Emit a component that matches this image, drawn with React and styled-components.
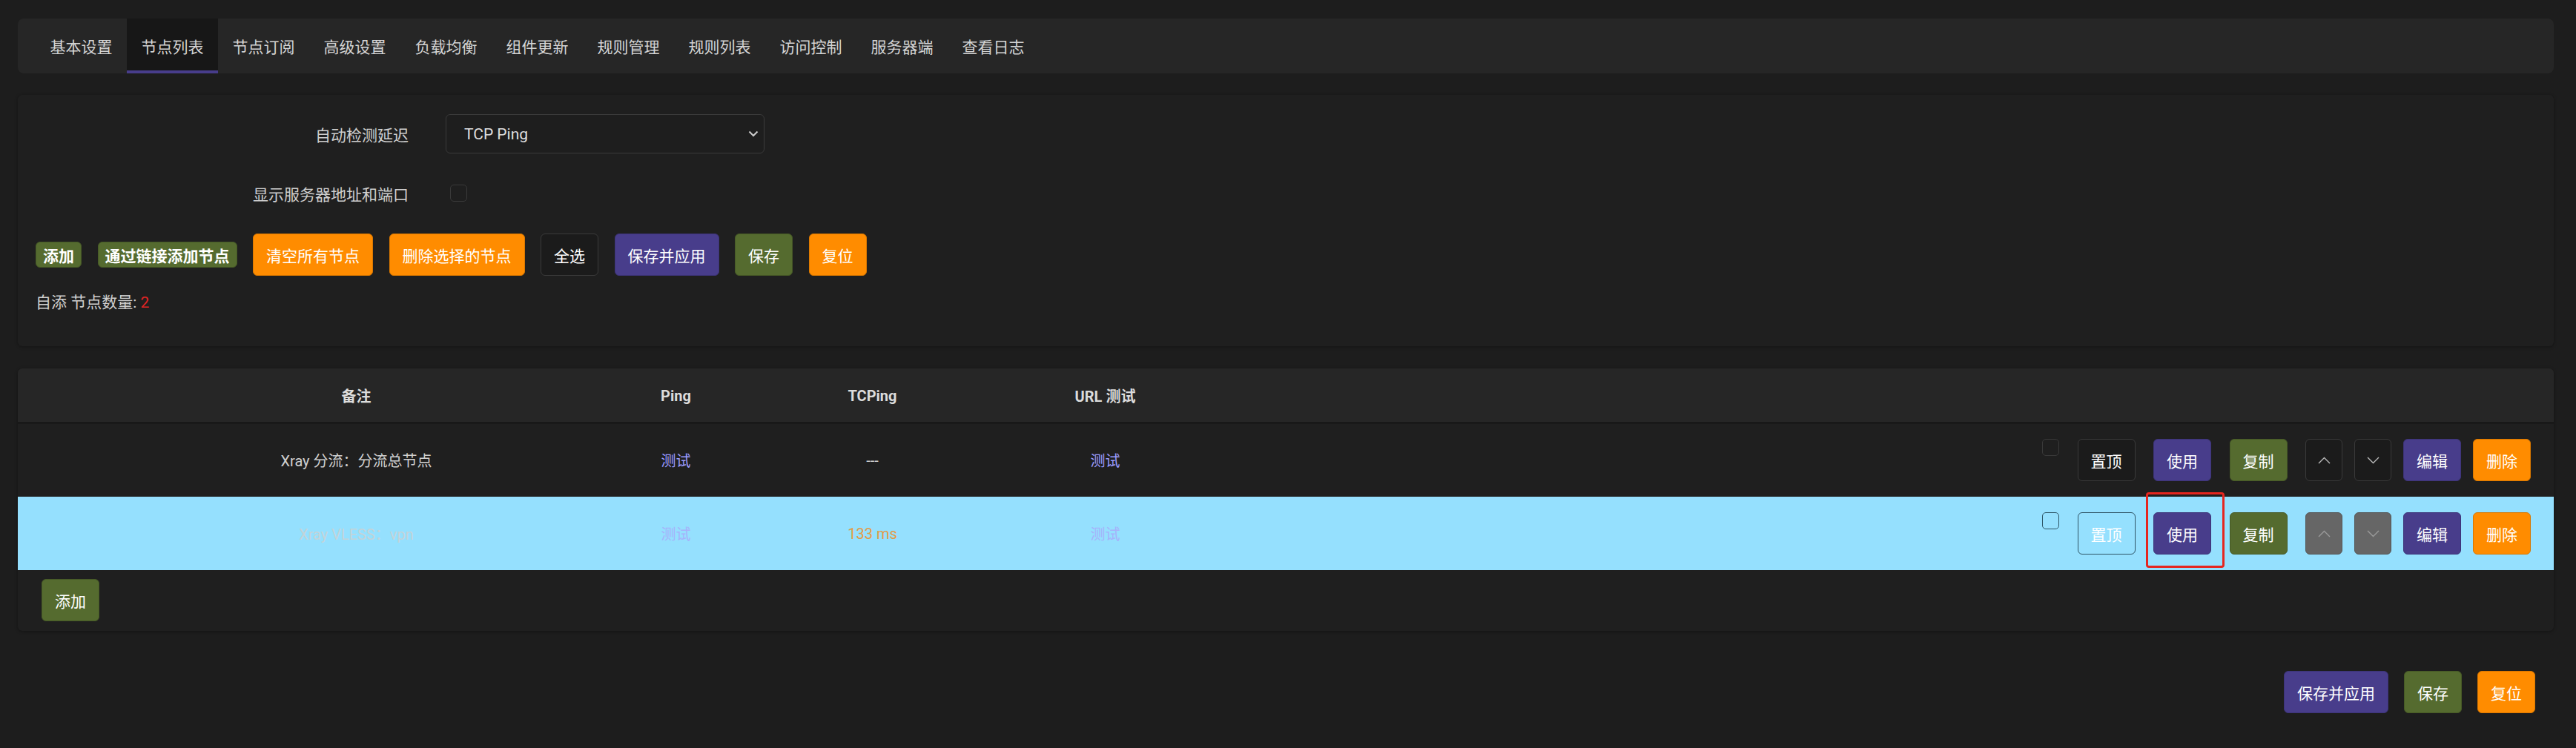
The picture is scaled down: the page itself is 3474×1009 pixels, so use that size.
import React from 'react';
import styled, { createGlobalStyle, css } from 'styled-components';

const GlobalStyle = createGlobalStyle`
    * { box-sizing: border-box; }
    body {
        margin: 0;
        background: #1d1d1d;
        font-family: Roboto, "Noto Sans CJK SC", sans-serif;
        color: #d2d2d2;
    }
`;

const Page = styled.div`
    padding: 25px 30px 40px 24px;
`;

const TabBar = styled.nav`
    display: flex;
    height: 74px;
    padding-left: 24px;
    background: #262626;
    border-radius: 8px;
`;

const Tab = styled.div`
    display: flex;
    align-items: center;
    padding: 0 19.5px;
    font-size: 21px;
    color: #d4d4d4;
    background: ${({ $active }) => ($active ? '#171717' : 'transparent')};
    box-shadow: ${({ $active }) => ($active ? 'inset 0 -4px 0 #483d8b' : 'none')};
`;

const Panel = styled.section`
    margin-top: ${({ $gap }) => $gap}px;
    background: #1f1f1f;
    border-radius: 6px;
    box-shadow: 0 1px 4px rgba(0, 0, 0, 0.35);
    overflow: hidden;
`;

const SettingsBody = styled.div`
    padding: 26px 24px 47px;
`;

const FormRow = styled.div`
    display: grid;
    grid-template-columns: 503px 430px;
    column-gap: 50px;
    align-items: center;
    height: 53px;
    margin-bottom: ${({ $mb }) => $mb || 0}px;
`;

const Label = styled.label`
    text-align: right;
    font-size: 21px;
    color: #cfcfcf;
`;

const SelectBox = styled.div`
    display: flex;
    align-items: center;
    justify-content: space-between;
    height: 53px;
    padding: 0 7px 0 24px;
    border: 1px solid #3b3b3b;
    border-radius: 6px;
    background: #1e1e1e;
    font-size: 21px;
    color: #dedede;
`;

const Check = styled.span`
    display: block;
    width: 23px;
    height: 23px;
    border: 1px solid ${({ $light }) => ($light ? '#2d5566' : '#3a3a3a')};
    border-radius: 5px;
    background: transparent;
    align-self: ${({ $top }) => ($top ? 'flex-start' : 'auto')};
    margin-top: ${({ $top }) => ($top ? '21px' : '0')};
    margin-left: ${({ $ml }) => $ml || 0}px;
`;

const ButtonRow = styled.div`
    display: flex;
    align-items: center;
    gap: 21.5px;
    margin-top: 28px;
`;

const variants = {
    orange: css`background: #ff8c00; border-color: #d97700;`,
    purple: css`background: #483d8b; border-color: #3d3478;`,
    green: css`background: #556b2f; border-color: #465926;`,
    dark: css`background: #1b1b1b; border-color: #3a3a3a;`,
    ghost: css`background: transparent; border-color: #2f5566;`,
    gray: css`background: #666666; border-color: #555555;`,
};

const Button = styled.button`
    display: inline-flex;
    align-items: center;
    justify-content: center;
    height: ${({ $small }) => ($small ? '35px' : '57px')};
    padding: ${({ $small, $icon }) => ($icon ? '0' : $small ? '0 9px' : '0 17px')};
    width: ${({ $icon }) => ($icon ? '50px' : 'auto')};
    border: 1px solid;
    border-radius: 6px;
    font-family: Roboto, "Noto Sans CJK SC", sans-serif;
    font-size: 21px;
    font-weight: ${({ $small }) => ($small ? 700 : 400)};
    color: #ffffff;
    cursor: pointer;
    ${({ $variant }) => variants[$variant]}
`;

const Count = styled.div`
    margin-top: 24px;
    font-size: 21px;
    line-height: 24px;
    color: #cfcfcf;

    b {
        font-weight: 400;
        color: #e02424;
    }
`;

const columns = '158px 597px 265px 265px 363px 1fr';

const HeadRow = styled.div`
    display: grid;
    grid-template-columns: ${columns};
    height: 74px;
    background: #262626;
    border-bottom: 1px solid #050505;
`;

const HeadCell = styled.div`
    display: flex;
    align-items: center;
    justify-content: center;
    font-size: 20px;
    font-weight: 700;
    color: #dcdcdc;
`;

const Row = styled.div`
    display: grid;
    grid-template-columns: ${columns};
    height: 99px;
    background: ${({ $selected }) => ($selected ? '#95e0fe' : 'transparent')};
`;

const Cell = styled.div`
    display: flex;
    align-items: center;
    justify-content: center;
    font-size: 20px;
    color: ${({ $tone }) => $tone || '#d0d0d0'};
`;

const Actions = styled.div`
    display: flex;
    align-items: center;
    justify-content: flex-end;
    gap: 24.5px;
    padding-right: 31px;
`;

const ArrowGroup = styled.div`
    display: flex;
    align-items: center;
    gap: 16px;
`;

const Marked = styled.span`
    position: relative;
    display: inline-flex;
`;

const Highlight = styled.span`
    position: absolute;
    top: -27px;
    left: -10px;
    right: -18px;
    bottom: -18px;
    border: 3px solid #e5261f;
    border-radius: 4px;
    pointer-events: none;
`;

const AddWrap = styled.div`
    padding: 12px 0 13px 32px;
`;

const Footer = styled.div`
    display: flex;
    justify-content: flex-end;
    gap: 21px;
    margin-top: 54px;
    padding-right: 25px;
`;

const Chevron = ({ up, color = '#b8b8b8' }) => (
    <svg width="17" height="10" viewBox="0 0 17 10">
        <polyline
            points={up ? '1,9 8.5,1.5 16,9' : '1,1 8.5,8.5 16,1'}
            fill="none"
            stroke={color}
            strokeWidth="1.4"
        />
    </svg>
);

const tabs = ['基本设置', '节点列表', '节点订阅', '高级设置', '负载均衡', '组件更新', '规则管理', '规则列表', '访问控制', '服务器端', '查看日志'];

const nodes = [
    { name: 'Xray 分流：分流总节点', tcping: '---', selected: false },
    { name: 'Xray VLESS：vpn', tcping: '133 ms', selected: true },
];

const NodeRow = ({ node }) => {
    const sel = node.selected;
    return (
        <Row $selected={sel}>
            <div />
            <Cell $tone={sel ? '#c4d3d8' : '#d0d0d0'}>{node.name}</Cell>
            <Cell $tone={sel ? '#a6b2fb' : '#9c9cff'}>测试</Cell>
            <Cell $tone={sel ? '#e39a45' : '#d0d0d0'}>{node.tcping}</Cell>
            <Cell $tone={sel ? '#a6b2fb' : '#9c9cff'}>测试</Cell>
            <Actions>
                <Check $top $light={sel} />
                <Button $variant={sel ? 'ghost' : 'dark'}>置顶</Button>
                {sel ? (
                    <Marked>
                        <Button $variant="purple">使用</Button>
                        <Highlight />
                    </Marked>
                ) : (
                    <Button $variant="purple">使用</Button>
                )}
                <Button $variant="green">复制</Button>
                <ArrowGroup>
                    <Button $icon $variant={sel ? 'gray' : 'dark'}>
                        <Chevron up color={sel ? '#9a9a9a' : '#b8b8b8'} />
                    </Button>
                    <Button $icon $variant={sel ? 'gray' : 'dark'}>
                        <Chevron color={sel ? '#9a9a9a' : '#b8b8b8'} />
                    </Button>
                    <Button $variant="purple">编辑</Button>
                    <Button $variant="orange">删除</Button>
                </ArrowGroup>
            </Actions>
        </Row>
    );
};

const App = () => {
    return (
        <>
            <GlobalStyle />
            <Page>
                <TabBar>
                    {tabs.map((t) => (
                        <Tab key={t} $active={t === '节点列表'}>{t}</Tab>
                    ))}
                </TabBar>

                <Panel $gap={29}>
                    <SettingsBody>
                        <FormRow $mb={27}>
                            <Label>自动检测延迟</Label>
                            <SelectBox>
                                <span>TCP Ping</span>
                                <svg width="14" height="9" viewBox="0 0 14 9">
                                    <polyline points="1.5,1.5 7,7 12.5,1.5" fill="none" stroke="#cccccc" strokeWidth="2" />
                                </svg>
                            </SelectBox>
                        </FormRow>
                        <FormRow>
                            <Label>显示服务器地址和端口</Label>
                            <Check $ml={6} />
                        </FormRow>
                        <ButtonRow>
                            <Button $small $variant="green">添加</Button>
                            <Button $small $variant="green">通过链接添加节点</Button>
                            <Button $variant="orange">清空所有节点</Button>
                            <Button $variant="orange">删除选择的节点</Button>
                            <Button $variant="dark">全选</Button>
                            <Button $variant="purple">保存并应用</Button>
                            <Button $variant="green">保存</Button>
                            <Button $variant="orange">复位</Button>
                        </ButtonRow>
                        <Count>自添 节点数量: <b>2</b></Count>
                    </SettingsBody>
                </Panel>

                <Panel $gap={30}>
                    <HeadRow>
                        <div />
                        <HeadCell>备注</HeadCell>
                        <HeadCell>Ping</HeadCell>
                        <HeadCell>TCPing</HeadCell>
                        <HeadCell>URL 测试</HeadCell>
                        <div />
                    </HeadRow>
                    {nodes.map((n) => (
                        <NodeRow key={n.name} node={n} />
                    ))}
                    <AddWrap>
                        <Button $variant="green">添加</Button>
                    </AddWrap>
                </Panel>

                <Footer>
                    <Button $variant="purple">保存并应用</Button>
                    <Button $variant="green">保存</Button>
                    <Button $variant="orange">复位</Button>
                </Footer>
            </Page>
        </>
    );
};

export default App;
